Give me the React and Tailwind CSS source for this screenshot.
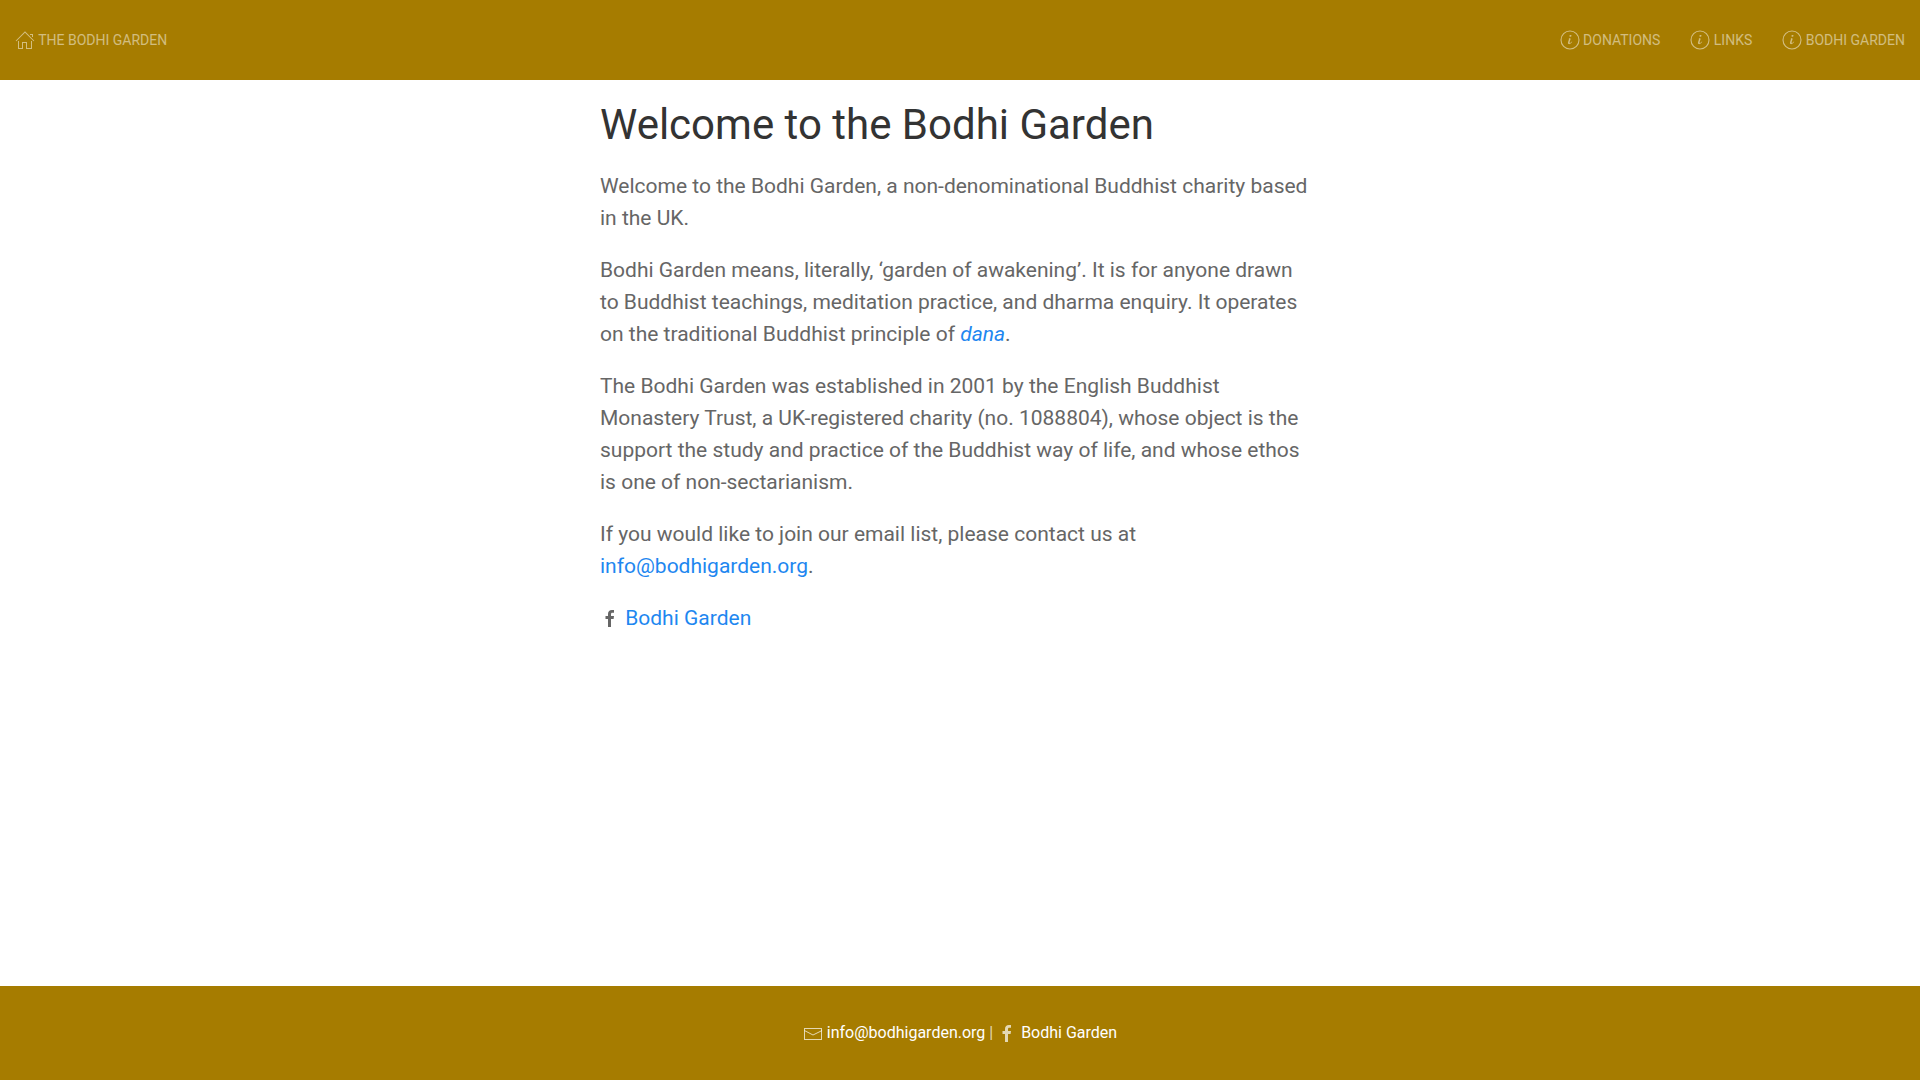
const pages = [
  { label: 'Donations', href: '#donations' },
  { label: 'Links', href: '#links' },
  { label: 'Bodhi Garden', href: '#bodhi-garden' },
]

function HomeIcon() {
  return (
    <svg width="20" height="20" viewBox="0 0 20 20" fill="currentColor" aria-hidden="true">
      <polygon points="18.65 11.35 10 2.71 1.35 11.35 0.65 10.65 10 1.29 19.35 10.65" />
      <polygon points="15 4 18 4 18 7 17 7 17 5 15 5" />
      <polygon points="3 11 4 11 4 18 7 18 7 12 12 12 12 18 16 18 16 11 17 11 17 19 11 19 11 13 8 13 8 19 3 19" />
    </svg>
  )
}

function InfoIcon() {
  return (
    <svg width="20" height="20" viewBox="0 0 20 20" fill="currentColor" aria-hidden="true">
      <path d="M12.13,11.59 C11.97,12.84 10.35,14.12 9.1,14.16 C6.17,14.2 9.89,9.46 8.74,8.37 C9.3,8.16 10.62,7.83 10.62,8.81 C10.62,9.63 10.12,10.55 9.88,11.32 C8.66,15.16 12.13,11.15 12.14,11.18 C12.16,11.21 12.16,11.35 12.13,11.59 Z M11.56,5.67 C11.56,6.67 9.36,7.15 9.36,6.03 C9.36,5 11.56,4.54 11.56,5.67 Z" />
      <circle fill="none" stroke="currentColor" strokeWidth="1.1" cx="10" cy="10" r="9" />
    </svg>
  )
}

function MailIcon() {
  return (
    <svg className="inline-block align-middle" width="20" height="20" viewBox="0 0 20 20" aria-hidden="true">
      <polyline fill="none" stroke="currentColor" points="1.4,6.5 10,11 19.1,6.5" />
      <path fill="currentColor" d="M 1,4 1,16 19,16 19,4 1,4 Z M 18,15 2,15 2,5 18,5 18,15 Z" />
    </svg>
  )
}

function FacebookIcon() {
  return (
    <svg className="inline-block align-middle" width="20" height="20" viewBox="0 0 20 20" fill="currentColor" aria-hidden="true">
      <path d="M11,10h2.6l0.4-3H11V5.3c0-0.9,0.2-1.5,1.5-1.5H14V1.1c-0.3,0-1-0.1-2.1-0.1C9.6,1,8,2.4,8,5v2H5.5v3H8v8h3V10z" />
    </svg>
  )
}

function NavLink({ href, icon, children }) {
  return (
    <a href={href} className="flex h-20 items-center px-[15px] text-sm text-white/50 uppercase">
      {icon}
      <span className="whitespace-pre"> {children}</span>
    </a>
  )
}

export default function App() {
  return (
    <div className="flex min-h-screen flex-col bg-white font-[Roboto,sans-serif] text-[#666]">
      <nav className="flex justify-between bg-[#a67c00]">
        <NavLink href="#home" icon={<HomeIcon />}>The Bodhi Garden</NavLink>
        <div className="flex">
          {pages.map(page => (
            <NavLink key={page.href} href={page.href} icon={<InfoIcon />}>
              {page.label}
            </NavLink>
          ))}
        </div>
      </nav>

      <main className="mx-auto w-full max-w-[750px] flex-1 px-[15px] pt-5 text-[21px] leading-8">
        <h1 className="mb-5 text-[42px] leading-[50px] text-[#333]">Welcome to the Bodhi Garden</h1>
        <div className="space-y-5 pr-2">
          <p>Welcome to the Bodhi Garden, a non-denominational Buddhist charity based in the UK.</p>
          <p>
            Bodhi Garden means, literally, ‘garden of awakening’. It is for anyone drawn to Buddhist
            teachings, meditation practice, and dharma enquiry. It operates on the traditional
            Buddhist principle of <a href="#dana" className="text-[#1e87f0] italic">dana</a>.
          </p>
          <p>
            The Bodhi Garden was established in 2001 by the English Buddhist Monastery Trust, a
            UK-registered charity (no. 1088804), whose object is the support the study and practice
            of the Buddhist way of life, and whose ethos is one of non-sectarianism.
          </p>
          <p>
            If you would like to join our email list, please contact us at{' '}
            <a href="mailto:info@bodhigarden.org" className="text-[#1e87f0]">info@bodhigarden.org</a>.
          </p>
          <p>
            <FacebookIcon /> <a href="#facebook" className="text-[#1e87f0]">Bodhi Garden</a>
          </p>
        </div>
      </main>

      <footer className="bg-[#a67c00] px-4 py-[35px] text-center text-base text-white/70">
        <MailIcon /> <a href="mailto:info@bodhigarden.org" className="text-white">info@bodhigarden.org</a>
        {' | '}
        <FacebookIcon /> <a href="#facebook" className="text-white">Bodhi Garden</a>
      </footer>
    </div>
  )
}
